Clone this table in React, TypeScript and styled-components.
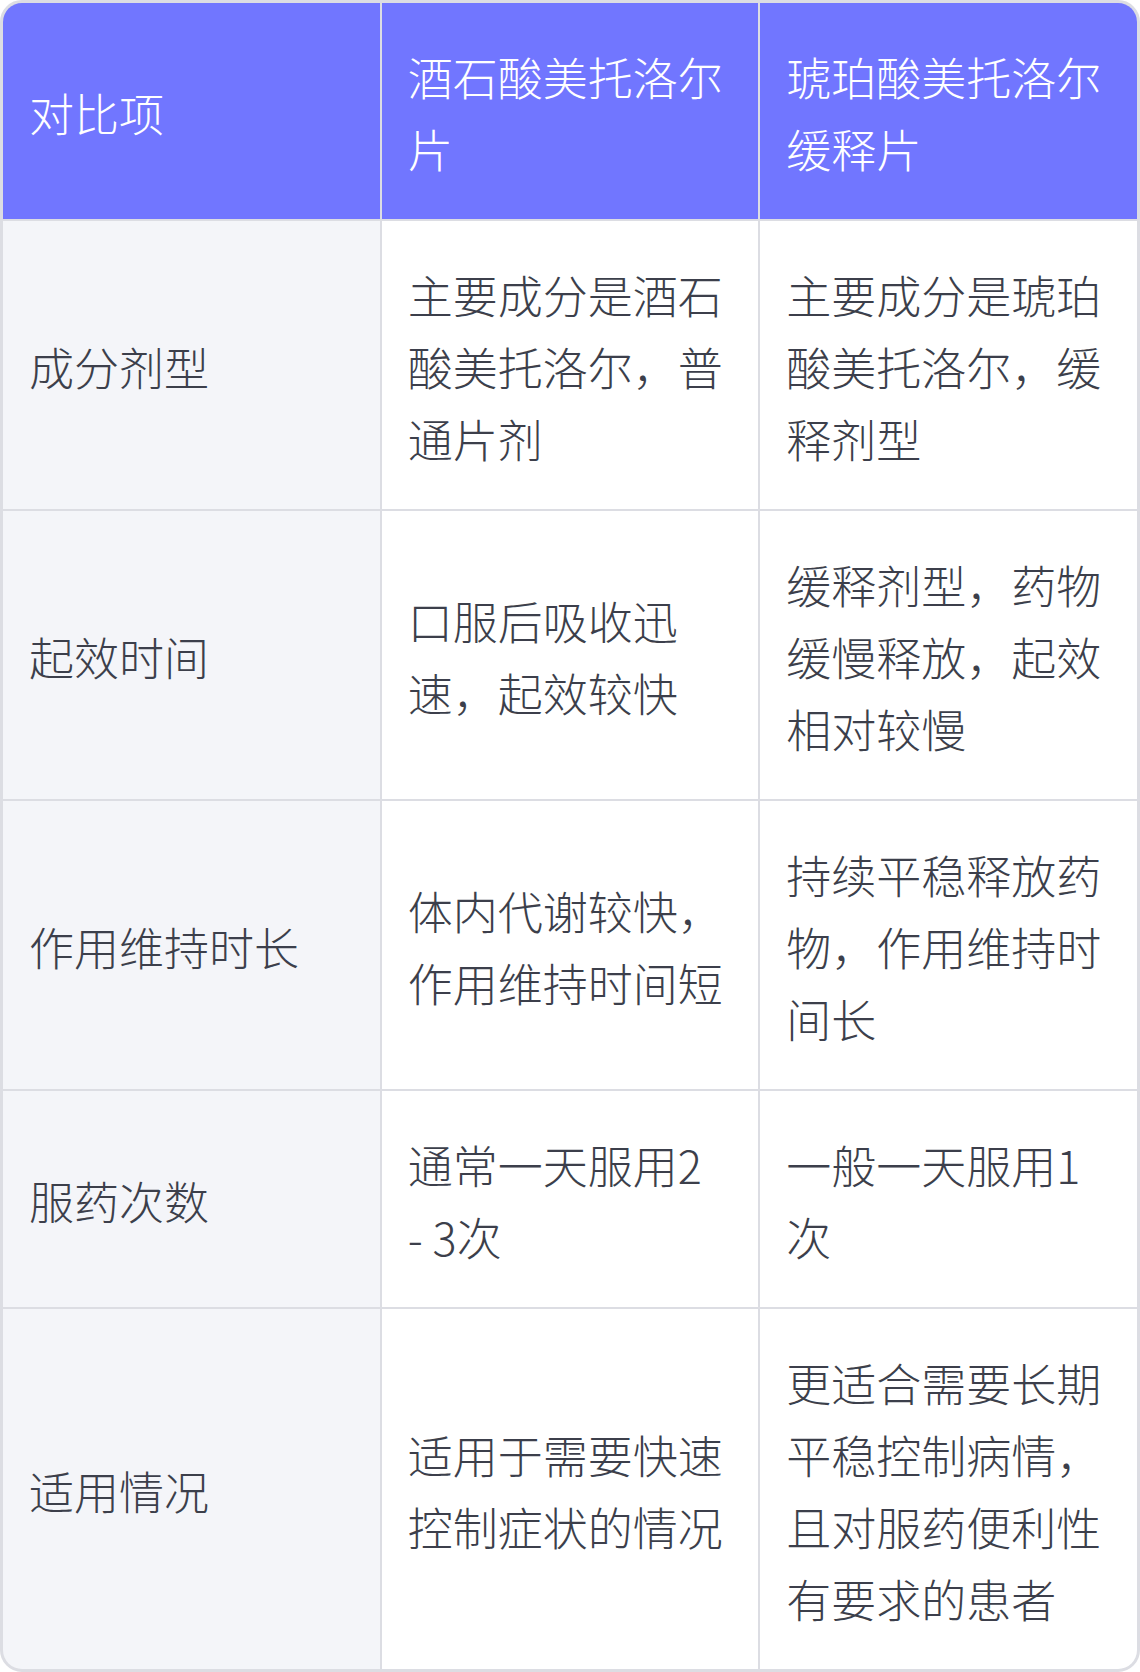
import styled, { createGlobalStyle } from 'styled-components'

const GlobalStyle = createGlobalStyle`
  html, body {
    margin: 0;
    padding: 0;
    background: #ffffff;
  }
  body {
    font-family: "Noto Sans CJK SC", "Noto Sans", sans-serif;
  }
`

const HEADERS = ['对比项', '酒石酸美托洛尔片', '琥珀酸美托洛尔缓释片']

const ROWS: string[][] = [
  ['成分剂型', '主要成分是酒石酸美托洛尔，普通片剂', '主要成分是琥珀酸美托洛尔，缓释剂型'],
  ['起效时间', '口服后吸收迅速，起效较快', '缓释剂型，药物缓慢释放，起效相对较慢'],
  ['作用维持时长', '体内代谢较快，作用维持时间短', '持续平稳释放药物，作用维持时间长'],
  ['服药次数', '通常一天服用2 - 3次', '一般一天服用1次'],
  ['适用情况', '适用于需要快速控制症状的情况', '更适合需要长期平稳控制病情，且对服药便利性有要求的患者'],
]

export default function App() {
  return (
    <>
      <GlobalStyle />
      <Table>
        {HEADERS.map((h) => (
          <HeadCell key={h}>{h}</HeadCell>
        ))}
        {ROWS.map((row) =>
          row.map((cell, i) => (
            <Cell key={`${row[0]}-${i}`} $label={i === 0}>
              {cell}
            </Cell>
          )),
        )}
      </Table>
    </>
  )
}

const Table = styled.div`
  display: grid;
  grid-template-columns: 1fr 1fr 1fr;
  gap: 2px;
  width: 1140px;
  box-sizing: border-box;
  border: 3px solid #dcdde3;
  border-radius: 22px;
  overflow: hidden;
  background: #dcdde3;
`

const HeadCell = styled.div`
  display: flex;
  align-items: center;
  padding: 38px 32px 34px 26px;
  background: #7176ff;
  color: #ffffff;
  font-size: 45px;
  line-height: 72px;
  font-weight: 300;
`

const Cell = styled.div<{ $label?: boolean }>`
  display: flex;
  align-items: center;
  padding: 38px 32px 34px 26px;
  background: ${(p) => (p.$label ? '#f4f5f9' : '#ffffff')};
  color: #3c3f4b;
  font-size: 45px;
  line-height: 72px;
  font-weight: 300;
`
